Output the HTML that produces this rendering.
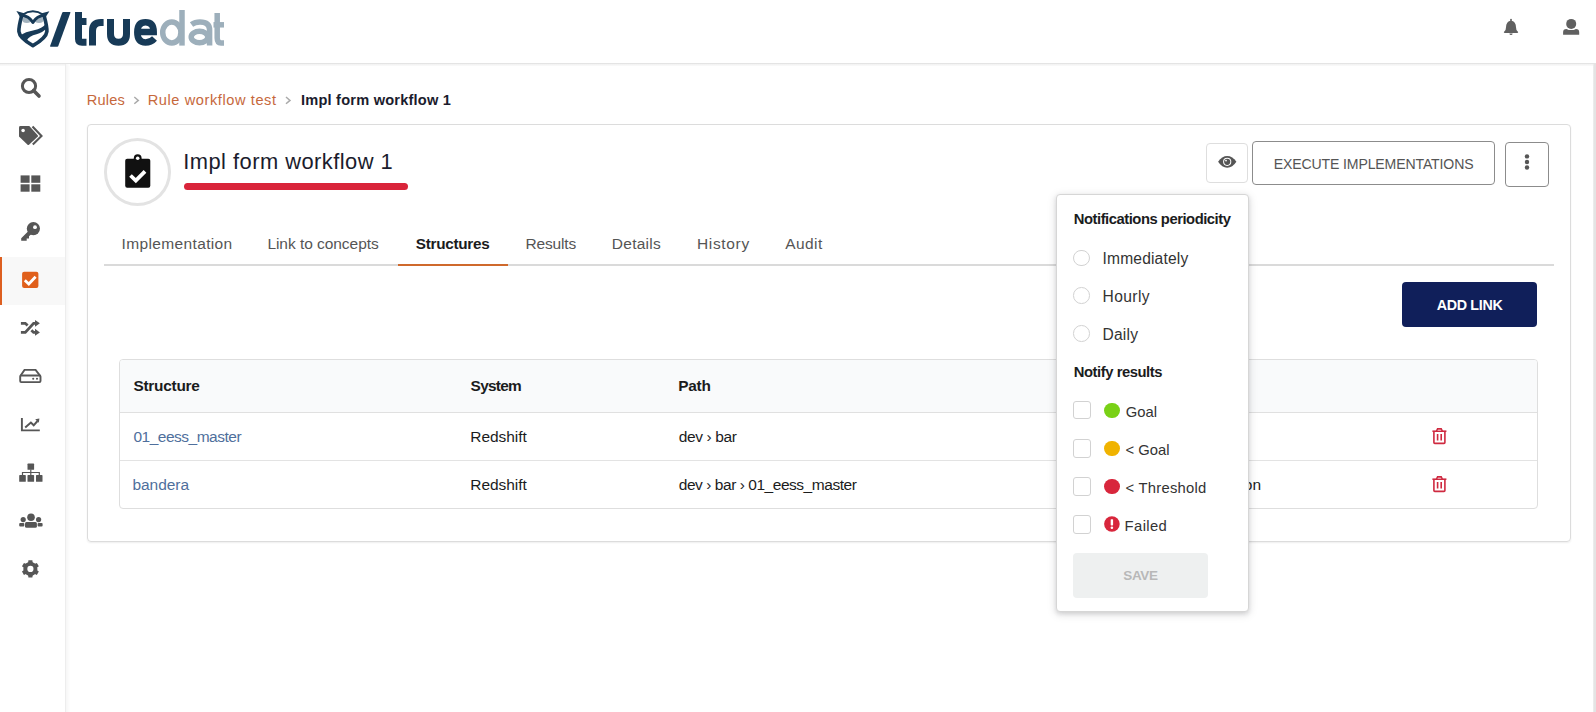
<!DOCTYPE html>
<html><head><meta charset="utf-8">
<style>
*{box-sizing:border-box;margin:0;padding:0}
html,body{width:1596px;height:712px;overflow:hidden;background:#fff;font-family:"Liberation Sans",sans-serif;color:#1b1c1d;position:relative}
.a{position:absolute}
.t{position:absolute;white-space:nowrap;line-height:1}
svg{overflow:visible}
</style></head><body>
<div class="a" style="left:0;top:0;width:1596px;height:63px;background:#fff"></div>
<div class="a" style="left:0;top:63px;width:1596px;height:1px;background:#e4e4e4"></div>
<div class="a" style="left:0;top:64px;width:1596px;height:2px;background:linear-gradient(#f1f1f1,#fafafa)"></div>
<svg class="a" style="left:0;top:0" width="240" height="60" viewBox="0 0 240 60">
<ellipse cx="26.8" cy="20" rx="4.4" ry="3" fill="#a3b3be"/>
<ellipse cx="39" cy="20" rx="4.4" ry="3" fill="#a3b3be"/>
<g fill="none" stroke="#173a57" stroke-linejoin="round">
<path d="M22.3,14.8 Q32.9,7.8 43.5,14.8" stroke-width="2"/>
<path d="M21.3,15.4 Q28.5,15.2 32.9,22.4 Q37.3,15.2 44.5,15.4" stroke-width="3"/>
<path d="M21.6,16 C20,22 18.6,27 18.9,31.5 C19.3,35.5 23,40 32.9,45.6 C42.8,40 46.5,35.5 46.9,31.5 C47.2,27 45.8,22 44.2,16" stroke-width="3.6"/>
</g>
<path d="M16.4,10.9 L25,13.6 L21,18.5 Z" fill="#173a57"/>
<path d="M49.4,11.2 L40.8,13.6 L44.8,18.5 Z" fill="#173a57"/>
<path d="M19.5,36.2 C23.5,32.6 28.5,31.6 34,30.3 C39.5,29 43.5,27 45.8,24 L46.6,28 C44,31.5 40.5,33.2 36.5,34.2 C31.5,35.4 28.2,37.2 26.5,40.8 L21.5,38.8 Z" fill="#173a57"/>
<path d="M63.2,12 H70 Q70.6,12 70.4,12.8 L58.3,46 Q58,46.8 57.3,46.8 H50.5 Q49.9,46.8 50.1,46 L62.2,12.8 Q62.5,12 63.2,12 Z" fill="#173a57"/>
<g fill="none" stroke="#173a57" stroke-width="7" stroke-linecap="butt">
<path d="M78.5,12 V39 Q78.5,42.2 82,42.2 H86.5"/>
<path d="M82,21.5 H86.5"/>
<path d="M92.5,45.6 V31 Q92.5,22.5 101,22.5 H103.6"/>
<path d="M110.5,19 V34 Q110.5,42.2 118.5,42.2 Q126.5,42.2 126.5,34 V19"/>
</g>
<g fill="none" stroke="#173a57" stroke-width="6.5">
<path d="M154.5,38.5 Q151,42.5 145.5,42.5 Q137.3,42.5 137.3,32.3 Q137.3,22.3 145.5,22.3 Q153.7,22.3 153.7,32 H139"/>
</g>
<g fill="none" stroke="#9dafbb" stroke-width="5.5">
<ellipse cx="171.8" cy="32.5" rx="9.1" ry="10.4"/>
<path d="M182,10 V45.6"/>
<path d="M191.5,24.5 Q195,21.9 200,21.9 Q209.6,21.9 209.6,30 V45.6"/>
<ellipse cx="199.5" cy="37" rx="8.3" ry="5.8"/>
<path d="M217.2,13 V38 Q217.2,42.9 221,42.9 H224"/>
<path d="M213.5,24.8 H224"/>
</g>
</svg>
<svg class="a" style="left:1500px;top:16px" width="24" height="22" viewBox="1500 16 24 22">
<rect x="1510.2" y="18.8" width="1.6" height="3" rx="0.8" fill="#606060"/>
<path fill="#606060" d="M1506,27.3 Q1506,21.2 1511,20.7 Q1516,21.2 1516,27.3 Q1516,30.4 1517.7,31.5 Q1518.4,32 1518.1,32.5 Q1517.9,32.9 1517.3,32.9 H1504.7 Q1504.1,32.9 1503.9,32.5 Q1503.6,32 1504.3,31.5 Q1506,30.4 1506,27.3 Z"/>
<path fill="#606060" d="M1509.4,33.5 h3.2 a1.6,1.5 0 0 1 -3.2,0 z"/>
</svg>
<svg class="a" style="left:1560px;top:16px" width="24" height="22" viewBox="1560 16 24 22">
<circle cx="1571.2" cy="23.9" r="5" fill="#606060"/>
<path fill="#606060" d="M1563.1,34.8 V32.2 Q1563.1,28.9 1566.5,28.9 Q1568.5,30.1 1571.2,30.1 Q1573.9,30.1 1575.9,28.9 Q1579.2,28.9 1579.2,32.2 V34.8 Z"/>
</svg>
<div class="a" style="left:65px;top:64px;width:1px;height:648px;background:#ededed"></div>
<div class="a" style="left:66px;top:64px;width:4px;height:648px;background:linear-gradient(to right,#f6f6f6,#fefefe)"></div>
<div class="a" style="left:0;top:257px;width:65px;height:48px;background:#f8f8f8"></div>
<div class="a" style="left:0;top:257px;width:2px;height:48px;background:#dd5f20"></div>
<div class="a" style="left:1593px;top:64px;width:3px;height:648px;background:linear-gradient(to right,#f0f0f0,#e4e4e4 45%,#e4e4e4)"></div>
<svg class="a" style="left:0;top:64px" width="65" height="540" viewBox="0 64 65 540">
<g fill="#565656">
<!-- search -->
<circle cx="29" cy="86" r="6.6" fill="none" stroke="#565656" stroke-width="3"/>
<path d="M33.5,90.5 L39,96" stroke="#565656" stroke-width="3.6" stroke-linecap="round"/>
<!-- tags -->
<path d="M19,127.5 Q19,126.1 20.5,126.1 H29.3 L37.9,135.4 Q38.3,135.9 37.9,136.4 L29,144.7 Q28.3,145.2 27.6,144.7 L19,136.4 Z"/>
<circle cx="23.1" cy="130.5" r="1.8" fill="#fff"/>
<path d="M32.5,126.5 L41.5,135.9 L32.8,144.5" fill="none" stroke="#565656" stroke-width="2.1"/>
<!-- grid -->
<rect x="20.6" y="175.4" width="9" height="7.4"/>
<rect x="31.3" y="175.4" width="9" height="7.4"/>
<rect x="20.6" y="184.3" width="9" height="7.4"/>
<rect x="31.3" y="184.3" width="9" height="7.4"/>
<!-- key -->
<circle cx="33.4" cy="228.6" r="6.6"/>
<path d="M28.5,231 L21.2,238.3 V240.8 H26.7 V238.5 H29 V236.3 L32,233.5 Z"/>
<circle cx="35" cy="227.2" r="1.9" fill="#fff"/>
<!-- shuffle -->
<g fill="none" stroke="#565656" stroke-width="2.8">
<path d="M20.9,323.3 H25.3 L27.6,325.6"/>
<path d="M20.9,332.4 H25.3 L33.6,323.3 H36"/>
<path d="M31.4,330.2 L33.6,332.4 H36"/>
</g>
<path d="M35,319.9 L39.9,323.3 L35,326.8 Z"/>
<path d="M35,328.7 L39.9,332.4 L35,335.8 Z"/>
<!-- hdd -->
<g fill="none" stroke="#565656" stroke-width="1.9">
<path d="M20.5,375.8 L24.5,369.9 H35.6 L40.2,375.8"/>
<rect x="20.2" y="375.5" width="20.3" height="6.6" rx="1"/>
</g>
<circle cx="33.2" cy="378.8" r="1.05"/><circle cx="37" cy="378.8" r="1.05"/>
<!-- chart -->
<path d="M21.9,418 V430.4 H39.8" fill="none" stroke="#565656" stroke-width="1.9"/>
<path d="M25.2,427.6 L30.9,422.6 L33.7,425.3 L37.5,421" fill="none" stroke="#565656" stroke-width="2"/>
<path d="M35.2,419.3 L39.4,418.6 L38.8,422.8 Z"/>
<!-- sitemap -->
<rect x="27.5" y="463.6" width="6.6" height="6.2" rx="0.6"/>
<rect x="19.2" y="475.1" width="6.6" height="6.7" rx="0.6"/>
<rect x="27.5" y="475.1" width="6.6" height="6.7" rx="0.6"/>
<rect x="36" y="475.1" width="6.5" height="6.7" rx="0.6"/>
<path d="M30.8,469.5 V475.5 M22.5,475.5 V472.5 H39.3 V475.5" fill="none" stroke="#565656" stroke-width="1.2"/>
<!-- users -->
<circle cx="31" cy="517.3" r="3.8"/>
<circle cx="23.2" cy="519.6" r="2.6"/>
<circle cx="38.6" cy="519.6" r="2.6"/>
<rect x="25" y="522" width="11.9" height="5.7" rx="1.5"/>
<rect x="19.2" y="522.9" width="5.1" height="3.7" rx="1"/>
<rect x="37.6" y="522.9" width="5" height="3.7" rx="1"/>
</g>
</svg>
<svg class="a" style="left:0;top:550px" width="65" height="40" viewBox="0 550 65 40">
<path fill="#565656" d="M28.15,562.38 L28.42,560.33 L32.38,560.33 L32.65,562.38 L34.93,563.69 L36.84,562.90 L38.82,566.33 L37.17,567.58 L37.17,570.22 L38.82,571.47 L36.84,574.90 L34.93,574.11 L32.65,575.42 L32.38,577.47 L28.42,577.47 L28.15,575.42 L25.87,574.11 L23.96,574.90 L21.98,571.47 L23.63,570.22 L23.63,567.58 L21.98,566.33 L23.96,562.90 L25.87,563.69 Z"/>
<circle cx="30.4" cy="568.9" r="6.9" fill="#565656"/>
<circle cx="30.4" cy="568.9" r="3.1" fill="#fff"/>
</svg>
<svg class="a" style="left:20px;top:270px" width="20" height="20" viewBox="20 270 20 20">
<rect x="22.1" y="271.8" width="16.3" height="16.2" rx="2" fill="#e0601c"/>
<path d="M24.8,280.2 L28.8,284 L35.6,276.8" fill="none" stroke="#fff" stroke-width="2.8"/>
</svg>
<svg class="a" style="left:130px;top:94px" width="14" height="14" viewBox="130 94 14 14"><path d="M134.3,97 L138.3,100.4 L134.3,103.8" fill="none" stroke="#aaa" stroke-width="1.5"/></svg>
<svg class="a" style="left:281px;top:94px" width="14" height="14" viewBox="281 94 14 14"><path d="M286,97 L290,100.4 L286,103.8" fill="none" stroke="#aaa" stroke-width="1.5"/></svg>
<div class="a" style="left:87px;top:124px;width:1484px;height:417.5px;border:1px solid #dcdcdc;border-radius:4px;box-shadow:0 1px 2px rgba(0,0,0,.07)"></div>
<div class="a" style="left:103.6px;top:138px;width:67.6px;height:67.8px;border:3px solid #e3e3e3;border-radius:50%"></div>
<svg class="a" style="left:118px;top:148px" width="40" height="46" viewBox="118 148 40 46">
<rect x="125.2" y="158.7" width="25.1" height="29" rx="2" fill="#111"/>
<circle cx="137.7" cy="158.2" r="3.9" fill="#111"/>
<circle cx="137.7" cy="158.2" r="1.8" fill="#fff"/>
<path d="M130.5,175.5 L135.8,180.6 L145,171.3" fill="none" stroke="#fff" stroke-width="3.8"/>
</svg>
<div class="a" style="left:183.8px;top:182.6px;width:224.4px;height:7px;background:#d9243a;border-radius:3.5px"></div>
<div class="a" style="left:1205.5px;top:143px;width:42.5px;height:39.5px;border:1px solid #dedede;border-radius:4px"></div>
<svg class="a" style="left:1214px;top:150px" width="26" height="24" viewBox="1214 150 26 24">
<path d="M1218.1,161.8 Q1222,155.9 1227.2,155.9 Q1232.5,155.9 1236.4,161.8 Q1232.5,167.7 1227.2,167.7 Q1222,167.7 1218.1,161.8 Z" fill="#555"/>
<circle cx="1227.2" cy="161.8" r="4.1" fill="#fff"/>
<circle cx="1227.2" cy="161.8" r="3.1" fill="#555"/>
<circle cx="1226" cy="160.6" r="0.9" fill="#fff"/>
</svg>
<div class="a" style="left:1252.3px;top:141.1px;width:243.2px;height:44.2px;border:1.5px solid #8c8c8c;border-radius:4px"></div>
<div class="a" style="left:1504.6px;top:142px;width:44.9px;height:44.8px;border:1.5px solid #8c8c8c;border-radius:4px"></div>
<svg class="a" style="left:1520px;top:150px" width="14" height="24" viewBox="1520 150 14 24">
<circle cx="1527" cy="156.4" r="2.2" fill="#555"/><circle cx="1527" cy="162" r="2.2" fill="#555"/><circle cx="1527" cy="167.5" r="2.2" fill="#555"/>
</svg>
<div class="a" style="left:104px;top:264px;width:1449.5px;height:2px;background:#dadada"></div>
<div class="a" style="left:397.5px;top:264px;width:110px;height:2px;background:#cf692c"></div>
<div class="a" style="left:1402.3px;top:282.3px;width:135.2px;height:44.6px;background:#101f5a;border-radius:4px"></div>
<div class="a" style="left:119px;top:359px;width:1418.5px;height:150px;border:1px solid #dedede;border-radius:4px;overflow:hidden"><div style="height:53px;background:#f9fafb;border-bottom:1px solid #e0e0e0"></div><div style="height:48px;border-bottom:1px solid #e3e3e3"></div></div>
<div class="t" style="right:335px;top:477px;font-size:15.5px;color:#1b1c1d">Description</div>
<svg class="a" style="left:1428px;top:424.9px" width="22" height="22" viewBox="1428 424.9 22 22">
<g fill="none" stroke="#cf2a40" stroke-width="1.6">
<path d="M1432.4,431.09999999999997 H1446.4"/>
<path d="M1436.5,430.9 L1437.6,428.7 H1441.2 L1442.3,430.9" fill="#e8a0aa"/>
<path d="M1433.9,431.4 V442.4 Q1433.9,443.29999999999995 1434.8,443.29999999999995 H1444 Q1444.9,443.29999999999995 1444.9,442.4 V431.4"/>
<path d="M1437.6,433.9 V440.4 M1441.2,433.9 V440.4"/>
</g></svg>
<svg class="a" style="left:1428px;top:472.9px" width="22" height="22" viewBox="1428 472.9 22 22">
<g fill="none" stroke="#cf2a40" stroke-width="1.6">
<path d="M1432.4,479.09999999999997 H1446.4"/>
<path d="M1436.5,478.9 L1437.6,476.7 H1441.2 L1442.3,478.9" fill="#e8a0aa"/>
<path d="M1433.9,479.4 V490.4 Q1433.9,491.29999999999995 1434.8,491.29999999999995 H1444 Q1444.9,491.29999999999995 1444.9,490.4 V479.4"/>
<path d="M1437.6,481.9 V488.4 M1441.2,481.9 V488.4"/>
</g></svg>
<div class="a" style="left:1056px;top:194px;width:192.5px;height:417.5px;background:#fff;border:1px solid #d6d6d6;border-radius:4px;box-shadow:0 2px 4px rgba(34,36,38,.12),0 2px 10px rgba(34,36,38,.15)"></div>
<div class="a" style="left:1073.2px;top:249.7px;width:16.6px;height:16.6px;border:1px solid #d2d2d2;border-radius:50%"></div>
<div class="a" style="left:1073.2px;top:287.3px;width:16.6px;height:16.6px;border:1px solid #d2d2d2;border-radius:50%"></div>
<div class="a" style="left:1073.2px;top:325.09999999999997px;width:16.6px;height:16.6px;border:1px solid #d2d2d2;border-radius:50%"></div>
<div class="a" style="left:1073.1px;top:401.1px;width:18.4px;height:18.4px;border:1px solid #d2d2d2;border-radius:3px"></div>
<div class="a" style="left:1104.1px;top:402.5px;width:15.6px;height:15.6px;border-radius:50%;background:#79d116"></div>
<div class="a" style="left:1073.1px;top:439.2px;width:18.4px;height:18.4px;border:1px solid #d2d2d2;border-radius:3px"></div>
<div class="a" style="left:1104.1px;top:440.59999999999997px;width:15.6px;height:15.6px;border-radius:50%;background:#f0b300"></div>
<div class="a" style="left:1073.1px;top:477.40000000000003px;width:18.4px;height:18.4px;border:1px solid #d2d2d2;border-radius:3px"></div>
<div class="a" style="left:1104.1px;top:478.8px;width:15.6px;height:15.6px;border-radius:50%;background:#d8263c"></div>
<div class="a" style="left:1073.1px;top:515.1999999999999px;width:18.4px;height:18.4px;border:1px solid #d2d2d2;border-radius:3px"></div>
<svg class="a" style="left:1103px;top:515.4px" width="18" height="18" viewBox="0 0 18 18"><circle cx="8.9" cy="9" r="7.8" fill="#d8263c"/><rect x="7.7" y="4.2" width="2.4" height="6.2" rx="0.6" fill="#fff"/><circle cx="8.9" cy="12.8" r="1.3" fill="#fff"/></svg>
<div class="a" style="left:1073px;top:553px;width:135px;height:44.7px;background:#eef0f0;border-radius:4px"></div>
<div class="t" style="left:86.8px;top:93px;font-size:14.6px;font-weight:400;color:#c6683c;letter-spacing:0.171px;">Rules</div>

<div class="t" style="left:147.7px;top:93px;font-size:14.6px;font-weight:400;color:#c6683c;letter-spacing:0.585px;">Rule workflow test</div>

<div class="t" style="left:301px;top:93px;font-size:14.6px;font-weight:700;color:#1b1c2d;letter-spacing:0.209px;">Impl form workflow 1</div>

<div class="t" style="left:183.2px;top:151px;font-size:21.9px;font-weight:400;color:#1b1c2d;letter-spacing:0.467px;">Impl form workflow 1</div>

<div class="t" style="left:121.6px;top:236px;font-size:15.5px;font-weight:400;color:#555;letter-spacing:0.358px;">Implementation</div>

<div class="t" style="left:267.4px;top:236px;font-size:15.5px;font-weight:400;color:#555;letter-spacing:-0.044px;">Link to concepts</div>

<div class="t" style="left:415.8px;top:236px;font-size:15.3px;font-weight:700;color:#1b1c1d;letter-spacing:-0.289px;">Structures</div>

<div class="t" style="left:525.4px;top:236px;font-size:15.5px;font-weight:400;color:#555;letter-spacing:-0.139px;">Results</div>

<div class="t" style="left:611.8px;top:236px;font-size:15.5px;font-weight:400;color:#555;letter-spacing:0.262px;">Details</div>

<div class="t" style="left:697px;top:236px;font-size:15.5px;font-weight:400;color:#555;letter-spacing:0.654px;">History</div>

<div class="t" style="left:785.3px;top:236px;font-size:15.5px;font-weight:400;color:#555;letter-spacing:0.394px;">Audit</div>

<div class="t" style="left:1273.7px;top:157px;font-size:14.1px;font-weight:400;color:#555;letter-spacing:-0.144px;">EXECUTE IMPLEMENTATIONS</div>

<div class="t" style="left:1436.7px;top:298px;font-size:14.3px;font-weight:700;color:#fff;letter-spacing:-0.325px;">ADD LINK</div>

<div class="t" style="left:133.4px;top:378px;font-size:15.4px;font-weight:700;color:#1b1c1d;letter-spacing:-0.245px;">Structure</div>

<div class="t" style="left:470.6px;top:378px;font-size:15.4px;font-weight:700;color:#1b1c1d;letter-spacing:-0.714px;">System</div>

<div class="t" style="left:678.3px;top:378px;font-size:15.4px;font-weight:700;color:#1b1c1d;letter-spacing:-0.25px;">Path</div>

<div class="t" style="left:133.4px;top:429px;font-size:15.5px;font-weight:400;color:#4f6f9c;letter-spacing:-0.495px;">01_eess_master</div>

<div class="t" style="left:132.4px;top:477px;font-size:15.5px;font-weight:400;color:#4f6f9c;letter-spacing:-0.027px;">bandera</div>

<div class="t" style="left:470.3px;top:429px;font-size:15.5px;font-weight:400;color:#1b1c1d;letter-spacing:-0.051px;">Redshift</div>

<div class="t" style="left:470.3px;top:477px;font-size:15.5px;font-weight:400;color:#1b1c1d;letter-spacing:-0.051px;">Redshift</div>

<div class="t" style="left:678.8px;top:429px;font-size:15.5px;font-weight:400;color:#1b1c1d;letter-spacing:-0.376px;">dev › bar</div>

<div class="t" style="left:678.8px;top:477px;font-size:15.5px;font-weight:400;color:#1b1c1d;letter-spacing:-0.459px;">dev › bar › 01_eess_master</div>

<div class="t" style="left:1073.8px;top:212px;font-size:14.8px;font-weight:700;color:#1b1c1d;letter-spacing:-0.475px;">Notifications periodicity</div>

<div class="t" style="left:1102.5px;top:251px;font-size:15.6px;font-weight:400;color:#333;letter-spacing:0.164px;">Immediately</div>

<div class="t" style="left:1102.5px;top:289px;font-size:15.6px;font-weight:400;color:#333;letter-spacing:0.407px;">Hourly</div>

<div class="t" style="left:1102.5px;top:327px;font-size:15.6px;font-weight:400;color:#333;letter-spacing:0.209px;">Daily</div>

<div class="t" style="left:1073.8px;top:365px;font-size:14.8px;font-weight:700;color:#1b1c1d;letter-spacing:-0.456px;">Notify results</div>

<div class="t" style="left:1125.7px;top:405px;font-size:14.8px;font-weight:400;color:#333;letter-spacing:0.011px;">Goal</div>

<div class="t" style="left:1125.6px;top:443px;font-size:14.8px;font-weight:400;color:#333;letter-spacing:-0.024px;">&lt; Goal</div>

<div class="t" style="left:1125.6px;top:481px;font-size:14.8px;font-weight:400;color:#333;letter-spacing:0.238px;">&lt; Threshold</div>

<div class="t" style="left:1124.6px;top:519px;font-size:14.8px;font-weight:400;color:#333;letter-spacing:0.386px;">Failed</div>

<div class="t" style="left:1123.3px;top:569px;font-size:13.5px;font-weight:700;color:#b8b8b8;letter-spacing:-0.352px;">SAVE</div>

</body></html>
